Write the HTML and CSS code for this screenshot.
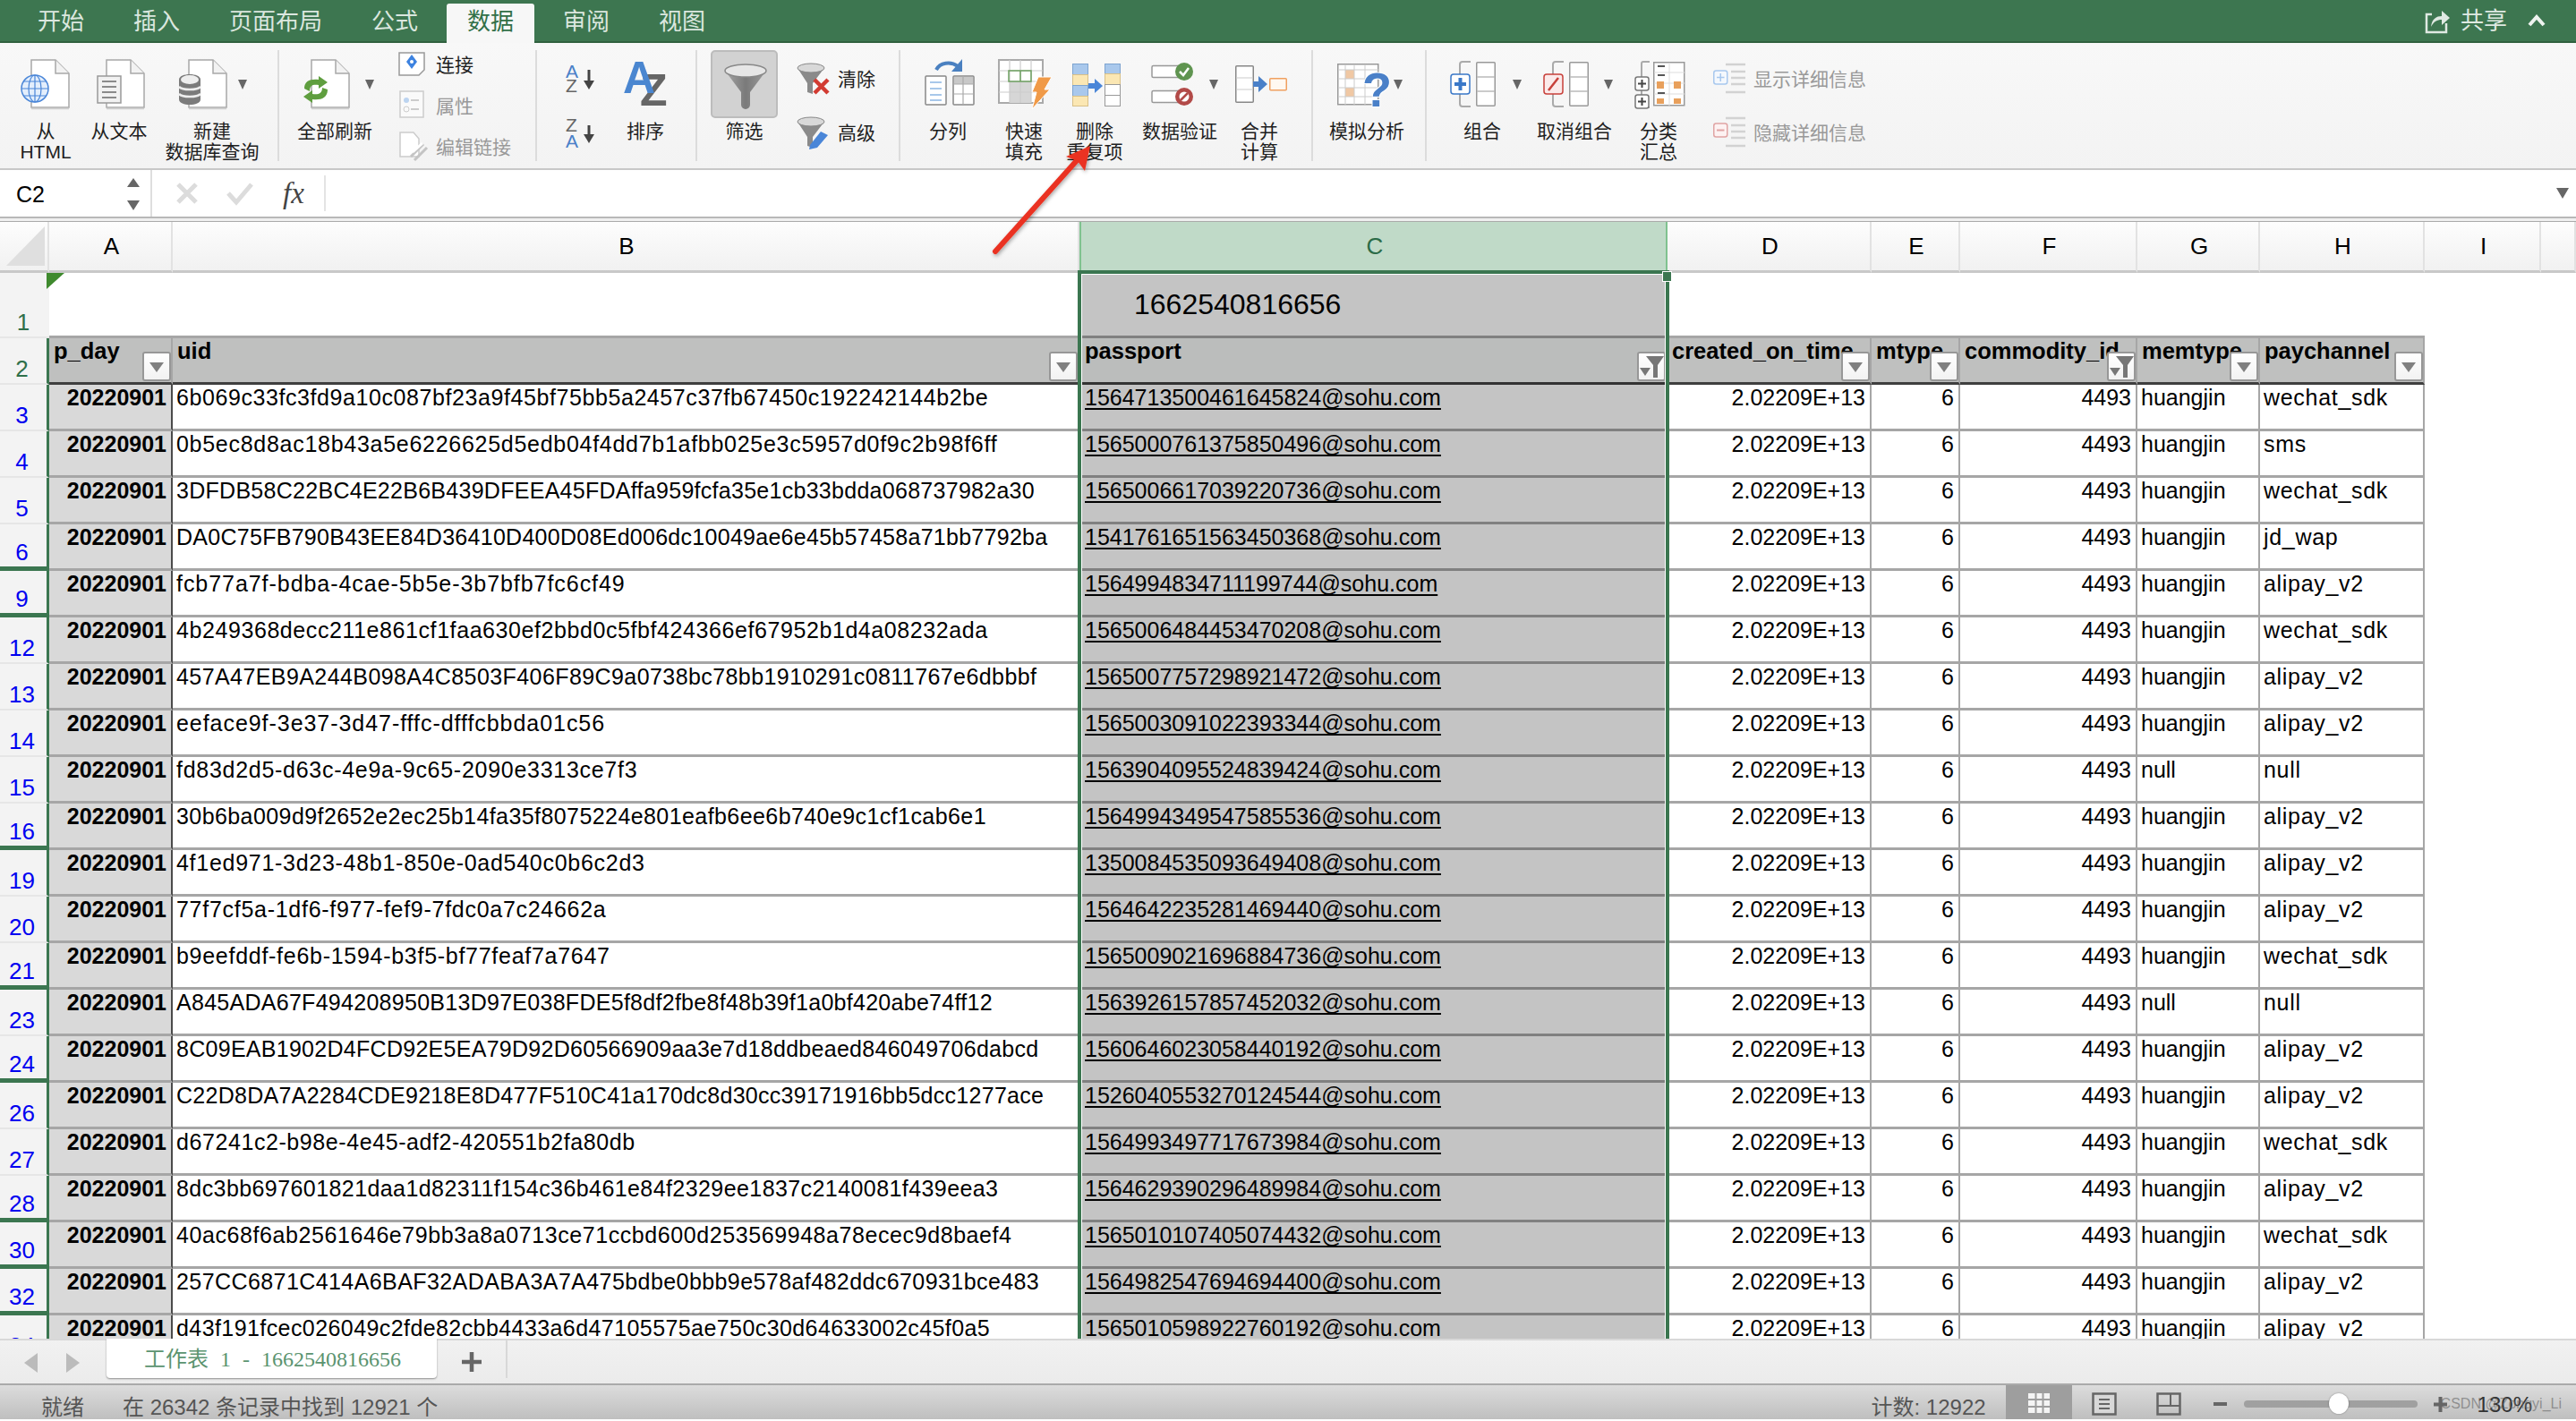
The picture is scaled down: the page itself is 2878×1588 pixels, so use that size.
FILE: index.html
```html
<!DOCTYPE html>
<html lang="zh-CN">
<head>
<meta charset="utf-8">
<title>工作表</title>
<link rel="stylesheet" href="styles.css">
</head>
<body>
<svg class="defs" width="0" height="0">
  <defs>
    <symbol id="doc" viewBox="0 0 44 56" width="44" height="56" overflow="visible">
      <path d="M1 1H28L43 16V54H1Z" fill="#fff" stroke="#a8a8a8" stroke-width="1.5"/>
      <path d="M28 1V16H43" fill="#f2f2f2" stroke="#a8a8a8" stroke-width="1.5"/>
      <path d="M1 55.5H43" stroke="#d0d0d0" stroke-width="1.5"/>
    </symbol>
    <symbol id="dd" viewBox="0 0 10 12" width="10" height="12">
      <path d="M0 1H10L5 12Z" fill="#666"/>
    </symbol>
    <symbol id="tbl" viewBox="0 0 22 50" width="22" height="50" overflow="visible">
      <rect x=".75" y=".75" width="20.5" height="48.5" rx="1" fill="#fff" stroke="#999" stroke-width="1.5"/>
      <path d="M1 17H21M1 33H21" stroke="#bbb" stroke-width="1.5"/>
    </symbol>
    <symbol id="brk" viewBox="0 0 14 52" width="14" height="52" overflow="visible">
      <path d="M13 1H4Q1 1 1 4V48Q1 51 4 51H13" fill="none" stroke="#aaa" stroke-width="2"/>
    </symbol>
    <symbol id="fnl" viewBox="0 0 32 34" width="32" height="34" overflow="visible">
      <path d="M1 5L12 22V32L18 34V22L31 5Z" fill="#8a8a8a"/>
      <ellipse cx="16" cy="5" rx="15" ry="5" fill="#d8d8d8" stroke="#888"/>
    </symbol>
    <symbol id="sub" viewBox="0 0 36 34" width="36" height="34" overflow="visible">
      <path d="M14 1H36M20 9H36M20 16H36M20 23H36M14 32H36" stroke="#d2d2d2" stroke-width="2.5"/>
    </symbol>
  </defs>
</svg>

<header class="tabs">
  <span class="tab">开始</span>
  <span class="tab">插入</span>
  <span class="tab">页面布局</span>
  <span class="tab">公式</span>
  <span class="tab tab-on">数据</span>
  <span class="tab">审阅</span>
  <span class="tab">视图</span>
  <div class="share">
    <svg width="28" height="30" viewBox="0 0 28 30"><path d="M8 8H2V28H24V18" fill="none" stroke="#dfe9e2" stroke-width="2.5"/><path d="M7 22C8 13 13 10 19 10V4L28 12L19 20V14C14 14 10 16 7 22Z" fill="#dfe9e2"/></svg>
    <span class="share-t">共享</span>
    <svg class="chev" width="20" height="14" viewBox="0 0 20 14"><path d="M2 12L10 3L18 12" fill="none" stroke="#eef3ef" stroke-width="4"/></svg>
  </div>
</header>

<section class="ribbon">
  <div class="it">
    <svg width="102" height="64" viewBox="0 62 102 64">
      <use href="#doc" x="34" y="66"/>
      <circle cx="39" cy="99" r="15" fill="#e3eefc" stroke="#4a86d8" stroke-width="1.5"/>
      <ellipse cx="39" cy="99" rx="7" ry="15" fill="none" stroke="#4a86d8" stroke-width="1.2"/>
      <path d="M24 99H54M26 91H52M26 107H52M39 84V114" stroke="#4a86d8" stroke-width="1.2"/>
    </svg>
    <div class="lb">从<br>HTML</div>
  </div>
  <div class="it">
    <svg width="62" height="64" viewBox="102 62 62 64">
      <use href="#doc" x="118" y="66"/>
      <rect x="109" y="85" width="26" height="30" fill="#f1f1f1" stroke="#999" stroke-width="1.5"/>
      <path d="M114 91H130M114 97H130M114 103H130M114 109H130" stroke="#8a8a8a" stroke-width="2"/>
    </svg>
    <div class="lb">从文本</div>
  </div>
  <div class="it">
    <svg width="136" height="64" viewBox="164 62 136 64">
      <use href="#doc" x="210" y="66"/>
      <path d="M200 89C200 81 224 81 224 89V111C224 119 200 119 200 111Z" fill="#7b7b7b"/>
      <ellipse cx="212" cy="89" rx="10" ry="5" fill="#eee"/>
      <path d="M200 97C204 101 220 101 224 97M200 105C204 109 220 109 224 105" fill="none" stroke="#eee" stroke-width="2.5"/>
      <use href="#dd" x="266" y="88"/>
    </svg>
    <div class="lb lb-n">新建<br>数据库查询</div>
  </div>
  <i class="sep"></i>
  <div class="it">
    <svg width="104" height="64" viewBox="322 62 104 64">
      <use href="#doc" x="347" y="66"/>
      <path d="M340 99C340 90 347 88 356 89V85L366 92L356 99V95C350 94 346 95 346 102Z" fill="#5f9e3f"/>
      <path d="M366 100C366 110 358 112 349 111V115L339 108L349 101V105C355 106 360 105 360 98Z" fill="#5f9e3f"/>
      <use href="#dd" x="408" y="88"/>
    </svg>
    <div class="lb">全部刷新</div>
  </div>
  <div class="col col-conn">
    <div class="sm">
      <svg width="32" height="46" viewBox="444 49 32 46"><path d="M446 60H474V79L468 85H446Z" fill="#fff" stroke="#999" stroke-width="1.5"/><path d="M460 62L466 70L460 78L454 70Z" fill="#3c82e0"/><circle cx="460" cy="70" r="2" fill="#fff"/></svg>
      <span>连接</span>
    </div>
    <div class="sm sm-off">
      <svg width="32" height="46" viewBox="444 95 32 46"><rect x="447" y="103" width="26" height="29" fill="#fafafa" stroke="#ccc" stroke-width="1.5"/><circle cx="454" cy="113" r="3" fill="#bcd4f0"/><circle cx="454" cy="123" r="3" fill="none" stroke="#ccc"/><path d="M459 113H468M459 123H468" stroke="#ccc" stroke-width="2"/></svg>
      <span>属性</span>
    </div>
    <div class="sm sm-off">
      <svg width="32" height="46" viewBox="444 141 32 46"><path d="M447 149H462L468 156V176H447Z" fill="#fff" stroke="#ccc" stroke-width="1.5"/><path d="M459 176L473 162M463 180L477 166" stroke="#c4c4c4" stroke-width="3"/><path d="M461 171L472 161" stroke="#fff" stroke-width="3"/></svg>
      <span>编辑链接</span>
    </div>
  </div>
  <i class="sep"></i>
  <svg class="sort" width="72" height="108" viewBox="608 62 72 108">
    <text class="az" x="632" y="87" fill="#4a80c8">A</text>
    <text class="az" x="632" y="103" fill="#666">Z</text>
    <path d="M658 78V92" stroke="#444" stroke-width="3"/><path d="M652 90H664L658 100Z" fill="#444"/>
    <text class="az" x="632" y="147" fill="#666">Z</text>
    <text class="az" x="632" y="165" fill="#4a80c8">A</text>
    <path d="M658 140V152" stroke="#444" stroke-width="3"/><path d="M652 150H664L658 160Z" fill="#444"/>
  </svg>
  <div class="it">
    <svg width="82" height="64" viewBox="680 62 82 64">
      <text class="azb" x="715" y="118" fill="#666">Z</text>
      <text class="azb" x="696" y="104" fill="#4a86d0">A</text>
    </svg>
    <div class="lb">排序</div>
  </div>
  <i class="sep"></i>
  <div class="it it-f">
    <div class="fbtn">
      <svg width="50" height="52" viewBox="0 0 50 52"><defs><linearGradient id="fg" x1="0" x2="1"><stop offset="0" stop-color="#a6a6a6"/><stop offset=".5" stop-color="#7a7a7a"/><stop offset="1" stop-color="#9c9c9c"/></linearGradient></defs><path d="M2 8L20 32V46A5 5 0 0 0 30 46V32L48 8Z" fill="url(#fg)"/><ellipse cx="25" cy="8" rx="23" ry="7" fill="#e6e6e6" stroke="#888" stroke-width="1.5"/></svg>
    </div>
    <div class="lb">筛选</div>
  </div>
  <div class="col col-clear">
    <div class="sm2">
      <svg width="38" height="60" viewBox="890 58 38 60"><use href="#fnl" x="890" y="72"/><path d="M910 90L925 105M925 90L910 105" stroke="#d23b32" stroke-width="4.5"/></svg>
      <span>清除</span>
    </div>
    <div class="sm2">
      <svg width="38" height="60" viewBox="890 118 38 60"><use href="#fnl" x="890" y="132"/><path d="M905 163L917 148L925 152L913 166L904 168Z" fill="#4a86d8"/></svg>
      <span>高级</span>
    </div>
  </div>
  <i class="sep"></i>
  <div class="it">
    <svg width="94" height="64" viewBox="1012 62 94 64">
      <path d="M1046 78C1050 70 1062 68 1070 74" fill="none" stroke="#4a80c0" stroke-width="4"/><path d="M1075 66V80H1063Z" fill="#4a80c0"/>
      <rect x="1034" y="85" width="23" height="32" rx="1" fill="#fff" stroke="#888" stroke-width="1.5"/>
      <path d="M1039 92H1052M1039 99H1052M1039 106H1052M1039 112H1052" stroke="#a8c8ea" stroke-width="2"/>
      <rect x="1065" y="85" width="23" height="32" rx="1" fill="#fff" stroke="#888" stroke-width="1.5"/>
      <rect x="1066" y="86" width="21" height="8" fill="#c8c8c8"/>
      <path d="M1065 94H1088M1065 105H1088M1076 85V117" stroke="#aaa" stroke-width="1.2"/>
    </svg>
    <div class="lb">分列</div>
  </div>
  <div class="it">
    <svg width="76" height="64" viewBox="1106 62 76 64">
      <rect x="1116" y="67" width="49" height="48" fill="#fff" stroke="#aaa" stroke-width="2"/>
      <rect x="1128" y="91" width="24" height="24" fill="#d6d6d6"/>
      <path d="M1128 67V115M1140 67V115M1152 67V115M1116 79H1165M1116 91H1165M1116 103H1165" stroke="#ccc" stroke-width="1.2"/>
      <rect x="1127" y="79" width="25" height="12" fill="none" stroke="#6ea060" stroke-width="1.5"/><path d="M1140 79V91" stroke="#6ea060" stroke-width="1.5"/>
      <path d="M1160 86H1175L1167 100H1173L1153 122L1158 103H1153Z" fill="#f09a48" stroke="#fff"/>
    </svg>
    <div class="lb">快速<br>填充</div>
  </div>
  <div class="it">
    <svg width="82" height="64" viewBox="1182 62 82 64">
      <rect x="1198.5" y="71.5" width="17" height="12" fill="#a9c8ec" stroke="#7ea4d0"/><rect x="1198.5" y="83.5" width="17" height="12" fill="#fbe7b3" stroke="#d8c088"/><rect x="1198.5" y="95.5" width="17" height="12" fill="#a9c8ec" stroke="#7ea4d0"/><rect x="1198.5" y="107.5" width="17" height="11" fill="#fbe7b3" stroke="#d8c088"/>
      <rect x="1234.5" y="71.5" width="17" height="11" fill="#a9c8ec" stroke="#7ea4d0"/><rect x="1234.5" y="82.5" width="17" height="12" fill="#fbe7b3" stroke="#d8c088"/><rect x="1234.5" y="94.5" width="17" height="12" fill="#fff" stroke="#999"/><rect x="1234.5" y="106.5" width="17" height="12" fill="#fff" stroke="#999"/>
      <path d="M1216 93H1223V88L1232 96L1223 104V99H1216Z" fill="#4a86d8"/>
    </svg>
    <div class="lb">删除<br>重复项</div>
  </div>
  <div class="it">
    <svg width="108" height="64" viewBox="1264 62 108 64">
      <rect x="1287" y="73.5" width="34" height="13" rx="1.5" fill="#fff" stroke="#999" stroke-width="1.5"/>
      <rect x="1287" y="101.5" width="34" height="13" rx="1.5" fill="#fff" stroke="#999" stroke-width="1.5"/>
      <circle cx="1323" cy="80" r="10" fill="#5f9450"/><path d="M1318 80L1322 84L1328 76" fill="none" stroke="#fff" stroke-width="2.5"/>
      <circle cx="1323" cy="108" r="10" fill="#b24a48"/><circle cx="1323" cy="108" r="5.5" fill="#fff"/><path d="M1319 112L1327 104" stroke="#b24a48" stroke-width="2.5"/>
      <use href="#dd" x="1351" y="88"/>
    </svg>
    <div class="lb">数据验证</div>
  </div>
  <div class="it">
    <svg width="70" height="64" viewBox="1372 62 70 64">
      <rect x="1380.75" y="73.75" width="19.5" height="40.5" rx="1" fill="#fff" stroke="#888" stroke-width="1.5"/>
      <path d="M1381 87H1400M1381 100H1400" stroke="#ccc" stroke-width="1.2"/>
      <path d="M1400 91H1406V85L1416 94L1406 103V97H1400Z" fill="#4a80c8"/>
      <rect x="1418.75" y="87.75" width="18.5" height="13" rx="1" fill="#fff8f0" stroke="#f0a060" stroke-width="1.5"/>
    </svg>
    <div class="lb">合并<br>计算</div>
  </div>
  <i class="sep"></i>
  <div class="it">
    <svg width="74" height="64" viewBox="1490 62 74 64">
      <rect x="1494.75" y="71.75" width="45" height="45" fill="#fff" stroke="#999" stroke-width="1.5"/>
      <rect x="1503" y="78" width="10" height="10" fill="#f0c8a4"/><rect x="1503" y="98" width="10" height="10" fill="#f0c8a4"/>
      <path d="M1503 72V117M1513 72V117M1525 72V117M1495 78H1540M1495 88H1540M1495 98H1540M1495 108H1540" stroke="#ccc"/>
      <text class="qm" x="1522" y="119" fill="#4a80c8">?</text>
      <use href="#dd" x="1557" y="88"/>
    </svg>
    <div class="lb">模拟分析</div>
  </div>
  <i class="sep"></i>
  <div class="it">
    <svg width="68" height="64" viewBox="1622 62 68 64">
      <use href="#brk" x="1630" y="68"/><use href="#tbl" x="1649" y="69"/>
      <rect x="1621" y="83" width="21" height="22" rx="3" fill="#fff" stroke="#3a78c8" stroke-width="1.5"/>
      <path d="M1631.5 87V101M1625 94H1638" stroke="#3a78c8" stroke-width="4"/>
    </svg>
    <div class="lb">组合</div>
  </div>
  <svg class="dd1" width="10" height="64" viewBox="1690 62 10 64"><use href="#dd" x="1690" y="88"/></svg>
  <div class="it">
    <svg width="118" height="64" viewBox="1700 62 118 64">
      <use href="#brk" x="1734" y="68"/><use href="#tbl" x="1753" y="69"/>
      <rect x="1725" y="83" width="21" height="22" rx="3" fill="#fbeaea" stroke="#c8403a" stroke-width="1.5"/>
      <path d="M1730 101L1741 87" stroke="#c8403a" stroke-width="2.5"/>
      <use href="#dd" x="1792" y="88"/>
    </svg>
    <div class="lb">取消组合</div>
  </div>
  <div class="it">
    <svg width="70" height="64" viewBox="1818 62 70 64">
      <path d="M1843 69H1836Q1834 69 1834 71V118Q1834 120 1836 120H1843" fill="none" stroke="#aaa" stroke-width="2"/>
      <rect x="1847.75" y="69.75" width="34" height="48" fill="#fff" stroke="#999" stroke-width="1.5"/>
      <path d="M1848 81H1882M1848 93H1882M1848 105H1882M1865 70V118" stroke="#ddd"/>
      <path d="M1852 74H1860M1852 84H1860M1852 104H1860" stroke="#555" stroke-width="2"/>
      <rect x="1851" y="91" width="8" height="8" fill="#e8a05c"/><rect x="1870" y="91" width="8" height="8" fill="#e8a05c"/>
      <rect x="1851" y="110" width="8" height="6" fill="#e8a05c"/><rect x="1870" y="110" width="8" height="6" fill="#e8a05c"/>
      <rect x="1827" y="86" width="15" height="15" rx="2.5" fill="#fff" stroke="#777" stroke-width="1.5"/><path d="M1834.5 89V98M1830 93.5H1839" stroke="#444" stroke-width="2"/>
      <rect x="1827" y="106" width="15" height="15" rx="2.5" fill="#fff" stroke="#777" stroke-width="1.5"/><path d="M1834.5 109V118M1830 113.5H1839" stroke="#444" stroke-width="2"/>
    </svg>
    <div class="lb">分类<br>汇总</div>
  </div>
  <div class="col col-detail">
    <div class="sm2 sm-off">
      <svg width="36" height="60" viewBox="1914 58 36 60"><use href="#sub" x="1914" y="72"/><rect x="1914.75" y="80" width="15" height="15" rx="2.5" fill="#f4f8fd" stroke="#a8c8ee" stroke-width="1.5"/><path d="M1922.25 83V92M1918 87.5H1926.5" stroke="#a8c8ee" stroke-width="1.5"/></svg>
      <span>显示详细信息</span>
    </div>
    <div class="sm2 sm-off">
      <svg width="36" height="60" viewBox="1914 118 36 60"><use href="#sub" x="1914" y="132"/><rect x="1914.75" y="139" width="15" height="15" rx="2.5" fill="#fdf2f2" stroke="#e0a4a4" stroke-width="1.5"/><path d="M1918 146.5H1926.5" stroke="#e0a4a4" stroke-width="2"/></svg>
      <span>隐藏详细信息</span>
    </div>
  </div>
</section>

<section class="formula">
  <div class="name">
    <span>C2</span>
    <svg width="14" height="36" viewBox="0 0 14 36"><path d="M7 0L14 10H0Z" fill="#666"/><path d="M7 36L14 25H0Z" fill="#666"/></svg>
  </div>
  <div class="fx-tools">
    <svg width="24" height="24" viewBox="0 0 24 24"><path d="M2 2L22 22M22 2L2 22" stroke="#dcdcdc" stroke-width="5"/></svg>
    <svg width="30" height="24" viewBox="0 0 30 24"><path d="M2 12L11 22L28 2" fill="none" stroke="#dcdcdc" stroke-width="5"/></svg>
    <span class="fx">fx</span>
  </div>
  <svg class="fx-more" width="14" height="12" viewBox="0 0 14 12"><path d="M0 0H14L7 12Z" fill="#666"/></svg>
</section>

<section class="sheet">
  <table class="grid">
    <colgroup>
      <col class="c-h"><col class="c-a"><col class="c-b"><col class="c-c"><col class="c-d"><col class="c-e"><col class="c-f"><col class="c-g"><col class="c-i"><col class="c-j"><col class="c-k">
    </colgroup>
    <thead>
      <tr>
        <th class="corner"><svg width="43" height="44" viewBox="0 0 43 44"><path d="M43 0V44H0Z" fill="#dfdfdf"/></svg></th>
        <th>A</th><th>B</th><th class="on">C</th><th>D</th><th>E</th><th>F</th><th>G</th><th>H</th><th>I</th><th></th>
      </tr>
    </thead>
    <tbody>
      <tr class="r1"><th class="rh g">1</th><td></td><td></td><td class="c big">1662540816656</td><td></td><td></td><td></td><td></td><td></td></tr>
      <tr class="r2"><th class="rh g">2</th>
        <td>p_day<b class="flt"></b></td>
        <td>uid<b class="flt"></b></td>
        <td class="c">passport<b class="flt flt-on"><svg width="28" height="26" viewBox="0 0 28 26"><path d="M1 14H13L7 23Z" fill="#777"/><path d="M8 1H28L21 11V25H16V11Z" fill="#777"/></svg></b></td>
        <td>created_on_time<b class="flt"></b></td>
        <td>mtype<b class="flt"></b></td>
        <td>commodity_id<b class="flt flt-on"><svg width="28" height="26" viewBox="0 0 28 26"><path d="M1 14H13L7 23Z" fill="#777"/><path d="M8 1H28L21 11V25H16V11Z" fill="#777"/></svg></b></td>
        <td>memtype<b class="flt"></b></td>
        <td>paychannel<b class="flt"></b></td>
      </tr>
      <tr><th class="rh">3</th><td class="a">20220901</td><td class="t6">6b069c33fc3fd9a10c087bf23a9f45bf75bb5a2457c37fb67450c192242144b2be</td><td class="c"><u>1564713500461645824@sohu.com</u></td><td class="n">2.02209E+13</td><td class="n">6</td><td class="n">4493</td><td>huangjin</td><td class="p">wechat_sdk</td></tr>
      <tr><th class="rh">4</th><td class="a">20220901</td><td class="t7">0b5ec8d8ac18b43a5e6226625d5edb04f4dd7b1afbb025e3c5957d0f9c2b98f6ff</td><td class="c"><u>1565000761375850496@sohu.com</u></td><td class="n">2.02209E+13</td><td class="n">6</td><td class="n">4493</td><td>huangjin</td><td class="p">sms</td></tr>
      <tr><th class="rh">5</th><td class="a">20220901</td><td class="t3">3DFDB58C22BC4E22B6B439DFEEA45FDAffa959fcfa35e1cb33bdda068737982a30</td><td class="c"><u>1565006617039220736@sohu.com</u></td><td class="n">2.02209E+13</td><td class="n">6</td><td class="n">4493</td><td>huangjin</td><td class="p">wechat_sdk</td></tr>
      <tr><th class="rh hid">6</th><td class="a">20220901</td><td class="t3">DA0C75FB790B43EE84D36410D400D08Ed006dc10049ae6e45b57458a71bb7792ba</td><td class="c"><u>1541761651563450368@sohu.com</u></td><td class="n">2.02209E+13</td><td class="n">6</td><td class="n">4493</td><td>huangjin</td><td class="p">jd_wap</td></tr>
      <tr><th class="rh hid">9</th><td class="a">20220901</td><td class="t9">fcb77a7f-bdba-4cae-5b5e-3b7bfb7fc6cf49</td><td class="c"><u>1564994834711199744@sohu.com</u></td><td class="n">2.02209E+13</td><td class="n">6</td><td class="n">4493</td><td>huangjin</td><td class="p">alipay_v2</td></tr>
      <tr><th class="rh">12</th><td class="a">20220901</td><td class="t6">4b249368decc211e861cf1faa630ef2bbd0c5fbf424366ef67952b1d4a08232ada</td><td class="c"><u>1565006484453470208@sohu.com</u></td><td class="n">2.02209E+13</td><td class="n">6</td><td class="n">4493</td><td>huangjin</td><td class="p">wechat_sdk</td></tr>
      <tr><th class="rh">13</th><td class="a">20220901</td><td class="t4">457A47EB9A244B098A4C8503F406F89C9a0738bc78bb1910291c0811767e6dbbbf</td><td class="c"><u>1565007757298921472@sohu.com</u></td><td class="n">2.02209E+13</td><td class="n">6</td><td class="n">4493</td><td>huangjin</td><td class="p">alipay_v2</td></tr>
      <tr><th class="rh">14</th><td class="a">20220901</td><td class="t9">eeface9f-3e37-3d47-fffc-dfffcbbda01c56</td><td class="c"><u>1565003091022393344@sohu.com</u></td><td class="n">2.02209E+13</td><td class="n">6</td><td class="n">4493</td><td>huangjin</td><td class="p">alipay_v2</td></tr>
      <tr><th class="rh">15</th><td class="a">20220901</td><td class="t7">fd83d2d5-d63c-4e9a-9c65-2090e3313ce7f3</td><td class="c"><u>1563904095524839424@sohu.com</u></td><td class="n">2.02209E+13</td><td class="n">6</td><td class="n">4493</td><td>null</td><td class="p">null</td></tr>
      <tr><th class="rh hid">16</th><td class="a">20220901</td><td class="t4">30b6ba009d9f2652e2ec25b14fa35f8075224e801eafb6ee6b740e9c1cf1cab6e1</td><td class="c"><u>1564994349547585536@sohu.com</u></td><td class="n">2.02209E+13</td><td class="n">6</td><td class="n">4493</td><td>huangjin</td><td class="p">alipay_v2</td></tr>
      <tr><th class="rh">19</th><td class="a">20220901</td><td class="t7">4f1ed971-3d23-48b1-850e-0ad540c0b6c2d3</td><td class="c"><u>1350084535093649408@sohu.com</u></td><td class="n">2.02209E+13</td><td class="n">6</td><td class="n">4493</td><td>huangjin</td><td class="p">alipay_v2</td></tr>
      <tr><th class="rh">20</th><td class="a">20220901</td><td class="t7">77f7cf5a-1df6-f977-fef9-7fdc0a7c24662a</td><td class="c"><u>1564642235281469440@sohu.com</u></td><td class="n">2.02209E+13</td><td class="n">6</td><td class="n">4493</td><td>huangjin</td><td class="p">alipay_v2</td></tr>
      <tr><th class="rh hid">21</th><td class="a">20220901</td><td class="t7">b9eefddf-fe6b-1594-b3f5-bf77feaf7a7647</td><td class="c"><u>1565009021696884736@sohu.com</u></td><td class="n">2.02209E+13</td><td class="n">6</td><td class="n">4493</td><td>huangjin</td><td class="p">wechat_sdk</td></tr>
      <tr><th class="rh">23</th><td class="a">20220901</td><td class="t3">A845ADA67F494208950B13D97E038FDE5f8df2fbe8f48b39f1a0bf420abe74ff12</td><td class="c"><u>1563926157857452032@sohu.com</u></td><td class="n">2.02209E+13</td><td class="n">6</td><td class="n">4493</td><td>null</td><td class="p">null</td></tr>
      <tr><th class="rh hid">24</th><td class="a">20220901</td><td class="t3">8C09EAB1902D4FCD92E5EA79D92D60566909aa3e7d18ddbeaed846049706dabcd</td><td class="c"><u>1560646023058440192@sohu.com</u></td><td class="n">2.02209E+13</td><td class="n">6</td><td class="n">4493</td><td>huangjin</td><td class="p">alipay_v2</td></tr>
      <tr><th class="rh">26</th><td class="a">20220901</td><td class="t3">C22D8DA7A2284CDE9218E8D477F510C41a170dc8d30cc39171916bb5dcc1277ace</td><td class="c"><u>1526040553270124544@sohu.com</u></td><td class="n">2.02209E+13</td><td class="n">6</td><td class="n">4493</td><td>huangjin</td><td class="p">alipay_v2</td></tr>
      <tr><th class="rh">27</th><td class="a">20220901</td><td class="t6">d67241c2-b98e-4e45-adf2-420551b2fa80db</td><td class="c"><u>1564993497717673984@sohu.com</u></td><td class="n">2.02209E+13</td><td class="n">6</td><td class="n">4493</td><td>huangjin</td><td class="p">wechat_sdk</td></tr>
      <tr><th class="rh hid">28</th><td class="a">20220901</td><td class="t4">8dc3bb697601821daa1d82311f154c36b461e84f2329ee1837c2140081f439eea3</td><td class="c"><u>1564629390296489984@sohu.com</u></td><td class="n">2.02209E+13</td><td class="n">6</td><td class="n">4493</td><td>huangjin</td><td class="p">alipay_v2</td></tr>
      <tr><th class="rh hid">30</th><td class="a">20220901</td><td class="t6">40ac68f6ab2561646e79bb3a8a0713ce71ccbd600d253569948a78ecec9d8baef4</td><td class="c"><u>1565010107405074432@sohu.com</u></td><td class="n">2.02209E+13</td><td class="n">6</td><td class="n">4493</td><td>huangjin</td><td class="p">wechat_sdk</td></tr>
      <tr><th class="rh hid">32</th><td class="a">20220901</td><td class="t4">257CC6871C414A6BAF32ADABA3A7A475bdbe0bbb9e578af482ddc670931bce483</td><td class="c"><u>1564982547694694400@sohu.com</u></td><td class="n">2.02209E+13</td><td class="n">6</td><td class="n">4493</td><td>huangjin</td><td class="p">alipay_v2</td></tr>
      <tr><th class="rh">34</th><td class="a">20220901</td><td class="t4">d43f191fcec026049c2fde82cbb4433a6d47105575ae750c30d64633002c45f0a5</td><td class="c"><u>1565010598922760192@sohu.com</u></td><td class="n">2.02209E+13</td><td class="n">6</td><td class="n">4493</td><td>huangjin</td><td class="p">alipay_v2</td></tr>
    </tbody>
  </table>
  <i class="a1"></i>
  <div class="sel"><i class="sel-h"></i></div>
</section>

<section class="sheets">
  <div class="nav">
    <svg width="16" height="22" viewBox="0 0 16 22"><path d="M15 0V22L0 11Z" fill="#bbb"/></svg>
    <svg width="16" height="22" viewBox="0 0 16 22"><path d="M1 0V22L16 11Z" fill="#bbb"/></svg>
  </div>
  <div class="stab">工作表 1 - 1662540816656</div>
  <svg class="add" width="22" height="22" viewBox="0 0 22 22"><path d="M11 0V22M0 11H22" stroke="#666" stroke-width="4.5"/></svg>
  <i class="sdiv"></i>
</section>

<footer class="status">
  <span class="st1">就绪</span>
  <span class="st2">在 26342 条记录中找到 12921 个</span>
  <span class="st3">计数: 12922</span>
  <div class="vw vw-on"><svg width="26" height="24" viewBox="0 0 26 24"><path d="M1 1H25V23H1Z" fill="#f4f4f4"/><path d="M9.5 0V24M17.5 0V24M0 8H26M0 16H26" stroke="#9e9e9e" stroke-width="2"/></svg></div>
  <div class="vw"><svg width="28" height="26" viewBox="0 0 28 26"><rect x="1.5" y="1.5" width="25" height="23" fill="#d8d8d8" stroke="#666" stroke-width="2.5"/><path d="M8 8H20M8 13H20M8 18H20" stroke="#666" stroke-width="2"/></svg></div>
  <div class="vw"><svg width="28" height="26" viewBox="0 0 28 26"><path d="M1.5 1.5H26.5V24.5H1.5Z" fill="none" stroke="#666" stroke-width="2.5"/><path d="M1.5 15H16V1.5M16 15H26.5" fill="none" stroke="#666" stroke-width="2"/></svg></div>
  <i class="zmin"></i>
  <div class="slider"><i class="knob"></i></div>
  <svg class="zplus" width="15" height="17" viewBox="0 0 15 17"><path d="M7.5 0V17M0 8.500H15" stroke="#666" stroke-width="4"/></svg>
  <span class="pct">130%</span>
  <span class="wm">CSDN @Zongyi_Li</span>
</footer>

<svg class="arrow" width="130" height="140" viewBox="1100 155 130 140">
  <defs><filter id="ash" x="-20%" y="-20%" width="140%" height="140%"><feDropShadow dx="1" dy="2" stdDeviation="2" flood-color="#000" flood-opacity=".35"/></filter></defs>
  <g filter="url(#ash)">
    <path d="M1112 281L1206 176" stroke="#ea3323" stroke-width="6" stroke-linecap="round"/>
    <path d="M1218 163L1191 175L1204 180L1212 191Z" fill="#ea3323"/>
  </g>
</svg>
</body>
</html>
```
FILE: styles.css
```css
* { box-sizing: border-box; }
html, body {
  margin: 0;
  width: 2878px;
  height: 1588px;
  overflow: hidden;
}
body {
  position: relative;
  display: flex;
  flex-direction: column;
  font-family: "Liberation Sans", "Noto Sans CJK SC", sans-serif;
  background: #fff;
  color: #000;
}
.defs { position: absolute; }
svg { display: block; flex: none; overflow: visible; }

/* title tabs */
.tabs {
  height: 48px;
  flex: none;
  display: flex;
  align-items: flex-end;
  gap: 9px;
  padding-left: 19px;
  background: #3d7650;
  border-bottom: 2px solid #30613f;
}
.tab {
  height: 44px;
  padding: 0 23px;
  font-size: 26px;
  line-height: 40px;
  color: #dbe7df;
  white-space: nowrap;
  margin-bottom: -2px;
}
.tab-on {
  background: #f7f7f7;
  color: #327048;
  border-radius: 3px 3px 0 0;
}
.share {
  margin-left: auto;
  align-self: center;
  display: flex;
  align-items: center;
  padding-right: 34px;
}
.share-t {
  font-size: 26px;
  color: #dfe9e2;
  margin-left: 12px;
  line-height: 36px;
}
.chev { margin-left: 23px; }

/* ribbon */
.ribbon {
  height: 142px;
  flex: none;
  display: grid;
  grid-template-columns: 102px 62px 136px 22px 104px 164px 18px 72px 82px 32px 75px 129px 14px 94px 76px 82px 108px 70px 48px 74px 58px 68px 10px 118px 70px 1fr;
  background: linear-gradient(#f8f8f8, #f3f3f3);
  border-bottom: 2px solid #c8c8c8;
  color: #1e1e1e;
}
.it {
  padding-top: 14px;
  display: flex;
  flex-direction: column;
  align-items: center;
  min-width: 0;
}
.lb {
  margin-top: 9px;
  font-size: 21px;
  line-height: 23px;
  text-align: center;
  white-space: nowrap;
}
.lb-n { padding-left: 10px; }
.sep {
  width: 2px;
  height: 124px;
  margin-top: 8px;
  justify-self: center;
  background: #dcdcdc;
}
.col { display: flex; flex-direction: column; font-size: 21px; white-space: nowrap; }
.col-conn { padding: 0 0 0 18px; }
.col-clear { padding: 9px 0 0 21px; }
.col-detail { padding: 9px 0 0 26px; }
.sm, .sm2 { display: flex; align-items: center; }
.sm { height: 46px; gap: 11px; }
.sm2 { height: 60px; gap: 8px; }
.sm-off span { color: #999; }
.col-detail .sm2 { gap: 9px; }
.sort { margin-top: 14px; }
.az {
  font-family: "Liberation Sans", sans-serif;
  font-size: 21px;
}
.azb {
  font-family: "Liberation Sans", sans-serif;
  font-size: 50px;
  font-weight: 700;
}
.qm {
  font-family: "Liberation Sans", sans-serif;
  font-size: 54px;
  font-weight: 700;
  stroke: #fff;
  stroke-width: 2px;
  paint-order: stroke;
}
.it-f { padding-top: 8px; }
.it-f .lb { margin-top: 3px; }
.fbtn {
  width: 75px;
  height: 76px;
  padding: 13px 0 0 12px;
  background: #d2d2d2;
  border: 2px solid #bcbcbc;
  border-radius: 5px;
}
.dd1 { margin-top: 14px; }

/* formula bar */
.formula {
  height: 52px;
  flex: none;
  display: flex;
  align-items: center;
  background: #fff;
}
.name {
  width: 170px;
  height: 100%;
  padding: 2px 12px 0 18px;
  display: flex;
  align-items: center;
  justify-content: space-between;
  border-right: 2px solid #dedede;
  font-size: 25px;
}
.fx-tools {
  display: flex;
  align-items: center;
  gap: 26px;
  height: 40px;
  padding: 0 22px 0 27px;
  border-right: 2px solid #e4e4e4;
}
.fx-tools svg:nth-child(2) { margin-left: 6px; }
.fx {
  margin-left: 7px;
  font-family: "Liberation Serif", serif;
  font-style: italic;
  font-size: 33px;
  color: #444;
  line-height: 40px;
}
.fx-more { margin-left: auto; margin-right: 8px; }

/* sheet */
.sheet {
  position: relative;
  flex: none;
  height: 1254px;
  overflow: hidden;
  border-top: 2px solid #b8b8b8;
  box-shadow: inset 0 3px 0 #f0f0f0;
}
.grid {
  margin-top: 3px;
  width: 2878px;
  table-layout: fixed;
  border-collapse: separate;
  border-spacing: 0;
  font-size: 25px;
  border-top: 1px solid #aaa;
}
.c-h { width: 55px; }
.c-a { width: 138px; }
.c-b { width: 1013px; }
.c-c { width: 657px; }
.c-d { width: 228px; }
.c-e { width: 99px; }
.c-f { width: 198px; }
.c-g { width: 137px; }
.c-i { width: 184px; }
.c-j { width: 130px; }
.c-k { width: 39px; }
thead th {
  height: 57px;
  padding: 0 0 0 3px;
  font-size: 26px;
  font-weight: 400;
  background: linear-gradient(#fdfdfd, #f1f1f1);
  border-right: 2px solid #e2e2e2;
  border-bottom: 3px solid #c8c8c8;
}
thead th.on {
  background: #c0dac8;
  color: #2b6b47;
  border-left: 2px solid #7fc28f;
  border-right: 2px solid #7fc28f;
}
thead th.corner { padding: 0 0 0 7px; }
tbody th, tbody td {
  height: 52px;
  padding: 0 5px 0 4px;
  line-height: 28px;
  vertical-align: top;
  white-space: nowrap;
  font-weight: 400;
  border-right: 2px solid #a6a6a6;
  border-bottom: 3px solid #a6a6a6;
}
tbody th.rh {
  padding: 0 3px 0 0;
  font-size: 26px;
  line-height: 32px;
  vertical-align: bottom;
  text-align: center;
  color: #0000f0;
  background: #f3f3f3;
  border-right: 3px solid #3b7650;
  border-bottom: 2px solid #e6e6e6;
}
tbody th.hid { border-bottom: 5px solid #3b7650; }
tbody th.g { color: #2f6f4a; }
tr.r1 th, tr.r1 td { height: 70px; border-right: 0; }
tr.r1 td.big {
  font-size: 32px;
  line-height: 70px;
  padding-left: 61px;
  vertical-align: middle;
}
tr.r2 td {
  position: relative;
  font-weight: 700;
  font-size: 25.5px;
  padding-left: 5px;
  background: #bfc0bf;
  border-bottom-color: #3f3f3f;
}
tbody td.a {
  font-weight: 700;
  text-align: right;
  background: #d9d9d9;
  padding-right: 5px;
  border-right-color: #4a4a4a;
}
tbody td.n { text-align: right; }
tbody td.c {
  background: #c4c4c4;
  border-bottom-color: #808080;
}
tr.r2 td.c { background: #bbbdbc; border-bottom-color: #333; padding-left: 6px; }
tbody td.c u { text-decoration-thickness: 2px; text-underline-offset: 3px; padding-left: 2px; }
.t3 { letter-spacing: .28px; }
.t4 { letter-spacing: .42px; }
.t6 { letter-spacing: .58px; }
.t7 { letter-spacing: .72px; }
.t9 { letter-spacing: .95px; }
.p { letter-spacing: .7px; }
.flt {
  position: absolute;
  right: 0;
  bottom: 1px;
  width: 32px;
  height: 33px;
  display: flex;
  align-items: center;
  justify-content: center;
  background: linear-gradient(#fff, #f2f2f2);
  border: 2px solid #979797;
  border-radius: 3px;
}
.flt::after {
  content: "";
  border-left: 8px solid transparent;
  border-right: 8px solid transparent;
  border-top: 11px solid #808080;
  margin-top: 2px;
}
.flt-on::after { display: none; }
.a1 {
  position: absolute;
  left: 52px;
  top: 61px;
  width: 20px;
  height: 18px;
  background: #3f8a2e;
  clip-path: polygon(0 0, 100% 0, 0 100%);
}
.sel {
  position: absolute;
  left: 1204px;
  top: 58px;
  width: 661px;
  height: 1300px;
  border: 4px solid #3b7650;
  box-shadow: inset 0 0 0 1px #fff;
}
.sel-h {
  position: absolute;
  right: -6px;
  top: -2px;
  width: 9px;
  height: 10px;
  background: #3b7650;
  outline: 1px solid #fff;
}

/* sheet tabs */
.sheets {
  height: 52px;
  flex: none;
  display: flex;
  align-items: flex-start;
  background: linear-gradient(#f1f1f1, #ebebeb);
  border-top: 2px solid #d8d8d8;
  border-bottom: 2px solid #aaa;
}
.nav {
  width: 119px;
  height: 48px;
  padding: 14px 0 0 27px;
  display: flex;
  gap: 30px;
}
.stab {
  width: 369px;
  height: 44px;
  margin-top: -2px;
  padding-left: 42px;
  background: #fff;
  border-radius: 0 0 4px 4px;
  box-shadow: 0 1px 2px rgba(0, 0, 0, .4);
  font-family: "Liberation Serif", "Noto Sans CJK SC", serif;
  font-size: 24px;
  line-height: 46px;
  word-spacing: 7px;
  color: #5b9470;
  white-space: nowrap;
}
.add { margin: 13px 0 0 28px; }
.sdiv {
  width: 2px;
  height: 42px;
  margin: 0 0 0 27px;
  background: #d8d8d8;
}

/* status bar */
.status {
  position: relative;
  height: 38px;
  flex: none;
  display: flex;
  align-items: center;
  background: linear-gradient(#dcdcdc, #bfbfbf);
  font-size: 24px;
  color: #555;
  white-space: nowrap;
  overflow: hidden;
}
.st1 { margin: 6px 0 0 46px; }
.st2 { margin: 6px 0 0 43px; }
.st3 { margin: 6px 0 0 auto; }
.vw {
  width: 72px;
  align-self: stretch;
  padding-top: 8px;
  display: flex;
  justify-content: center;
}
.vw-on {
  width: 74px;
  margin-left: 22px;
  background: #9e9e9e;
}
.zmin {
  width: 15px;
  height: 4px;
  margin: 4px 0 0 14px;
  background: #666;
}
.slider {
  position: relative;
  width: 194px;
  height: 8px;
  margin: 4px 0 0 19px;
  border-radius: 4px;
  background: #a0a0a0;
}
.knob {
  position: absolute;
  left: 95px;
  top: -8px;
  width: 22px;
  height: 23px;
  border-radius: 50%;
  background: #fff;
  box-shadow: 0 0 2px rgba(0, 0, 0, .4);
}
.zplus { margin: 4px 0 0 18px; }
.pct {
  margin: 6px 49px 0 34px;
  color: #333;
}
.wm {
  position: absolute;
  right: 16px;
  top: 9px;
  font-size: 16px;
  line-height: 24px;
  color: rgba(100, 100, 100, .6);
}

/* callout */
.arrow {
  position: absolute;
  left: 1100px;
  top: 155px;
  pointer-events: none;
}
```
